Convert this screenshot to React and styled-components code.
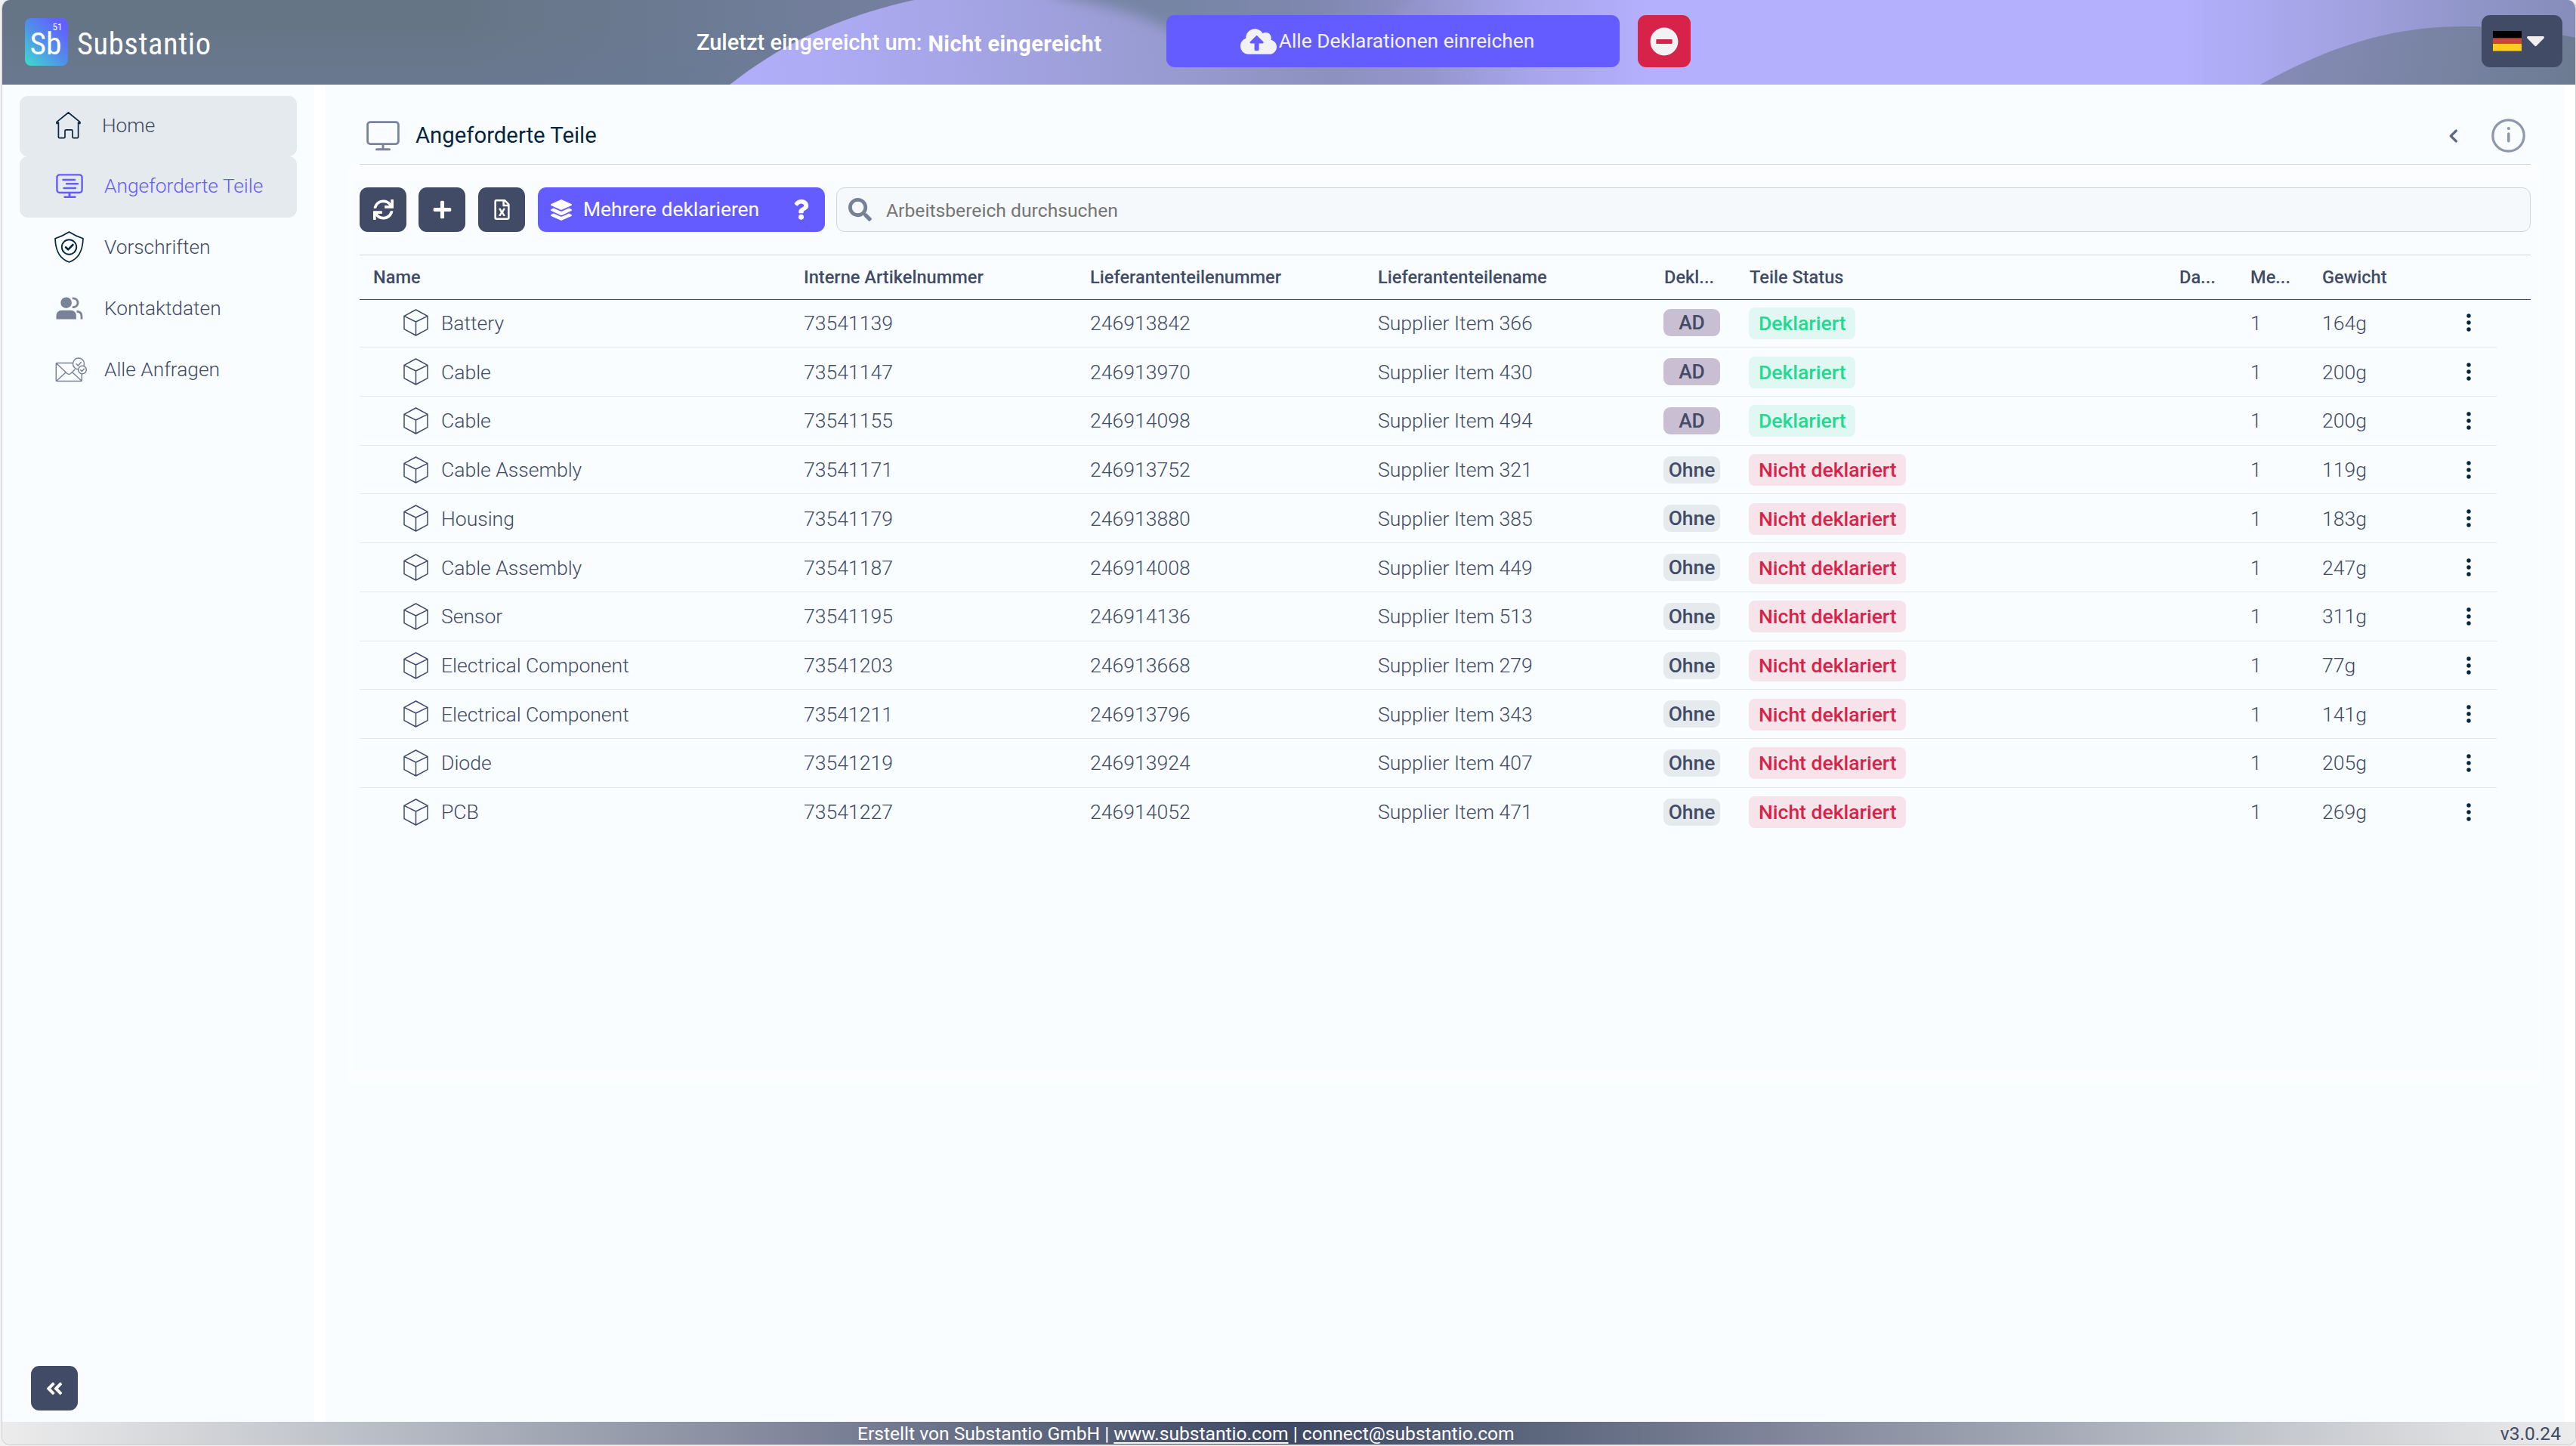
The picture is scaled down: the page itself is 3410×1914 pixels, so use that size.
import React from 'react';
import styled, { createGlobalStyle } from 'styled-components';
import {
  FaAngleDoubleLeft,
  FaCloudUploadAlt,
  FaLayerGroup,
  FaMinusCircle,
  FaPlus,
  FaQuestion,
  FaRegFileExcel,
  FaSearch,
  FaSync,
} from 'react-icons/fa';

const colors = {
  navy: '#414b66',
  ink: '#08253f',
  purple: '#645cff',
  red: '#d72349',
  muted: '#7a8298',
  surface: '#f9fdff',
  line: '#d1d6db',
  rowLine: '#e3e8ec',
};

const GlobalStyle = createGlobalStyle`
  * {
    box-sizing: border-box;
  }

  body {
    margin: 0;
    background: #f1f1f1;
    font-family: Roboto, sans-serif;
    color: ${colors.navy};
  }

  button {
    border: 0;
    padding: 0;
    font-family: inherit;
  }

  svg {
    display: block;
    flex: none;
  }
`;

const Page = styled.div`
  width: 3410px;
  height: 1914px;
  padding: 0 0 1px 2px;
`;

const Window = styled.div`
  display: flex;
  flex-direction: column;
  height: 100%;
  border: 1px solid #cdcfd1;
  border-top: 0;
  border-radius: 11px;
  overflow: hidden;
  background: #fff;
`;

/* Header */

const Header = styled.header`
  position: relative;
  display: flex;
  flex: none;
  height: 112px;
  color: #fff;
`;

const Backdrop = styled.svg`
  position: absolute;
  inset: 0;
  width: 100%;
  height: 100%;
`;

const Brand = styled.div`
  position: relative;
  display: flex;
  width: 919px;
  padding: 24px 0 0 30px;
`;

const Submitted = styled.div`
  position: relative;
  display: flex;
  width: 622px;
  font-size: 29px;
  line-height: 34px;
  font-weight: 500;
  white-space: nowrap;
  padding-top: 39px;
`;

const SubmittedValue = styled.b`
  font-weight: 700;
  letter-spacing: 0.4px;
  margin: 2px 0 0 8px;
`;

const HeaderButton = styled.button`
  position: relative;
  display: flex;
  align-items: center;
  justify-content: center;
  width: ${({ $width }) => $width}px;
  height: 69px;
  margin: 20px 24px 0 0;
  border-radius: 11px;
  background: ${({ $bg }) => $bg};
  color: #f2f2f5;
  font-size: 26.3px;
  gap: 3px;
  white-space: nowrap;
`;

const SubmitLabel = styled.span`
  padding-bottom: 1px;
  margin-right: 15px;
`;

const LanguageButton = styled(HeaderButton)`
  margin: 20px 17px 0 auto;
  gap: 7px;
  padding-right: 9px;
`;

/* Body */

const Body = styled.div`
  display: flex;
  flex: 1;
  min-height: 0;
`;

const Sidebar = styled.aside`
  display: flex;
  flex-direction: column;
  width: 413px;
  padding: 15px 23px;
  background: ${colors.surface};
`;

const NavItem = styled.a`
  display: flex;
  align-items: center;
  height: ${({ $height }) => $height || 81}px;
  border-radius: 11px;
  padding: 0 0 3px 48px;
  font-size: 26.3px;
  font-weight: 300;
  background: ${({ $filled }) => ($filled ? '#e5eaee' : 'transparent')};
  color: ${({ $active }) => ($active ? colors.purple : colors.navy)};
`;

const NavIcon = styled.span`
  width: ${({ $width }) => $width || 64}px;
  color: ${({ $color }) => $color};

  svg {
    margin-left: ${({ $nudge }) => $nudge || 0}px;
  }
`;

const CollapseButton = styled.button`
  display: flex;
  align-items: center;
  justify-content: center;
  width: 62px;
  height: 59px;
  margin: auto 0 0 15px;
  padding-right: 1px;
  border-radius: 11px;
  background: ${colors.navy};
  color: #fff;
`;

const Main = styled.main`
  width: 2964px;
  margin-left: 15px;
  padding: 0 30px;
  background: ${colors.surface};
`;

const TitleBar = styled.div`
  display: flex;
  align-items: center;
  height: 106px;
  margin: 0 15px;
  padding: 30px 7px 0 9px;
  border-bottom: 1px solid ${colors.line};
`;

const Title = styled.h1`
  flex: 1;
  margin: 0 0 2px 21px;
  font-size: 29.3px;
  font-weight: 400;
  color: ${colors.ink};
`;

const ChevronSlot = styled.span`
  margin-right: 44px;
`;

const Panel = styled.section`
  height: 1218px;
  border: solid #fcfdff;
  border-width: 20px 5px;
  border-radius: 6px;
  padding: 10px 10px 0;
`;

const Toolbar = styled.div`
  display: flex;
  height: 59px;
`;

const ToolButton = styled.button`
  display: flex;
  align-items: center;
  justify-content: center;
  width: 62px;
  margin-right: ${({ $gap }) => $gap || 16}px;
  border-radius: 11px;
  background: ${colors.navy};
  color: #fff;
`;

const DeclareGroup = styled.div`
  display: flex;
  align-items: center;
  width: 380px;
  margin-right: 15px;
  padding: 0 18px 0 17px;
  border-radius: 11px;
  background: ${colors.purple};
  color: #fff;
  font-size: 26.4px;
`;

const DeclareLabel = styled.span`
  flex: 1;
  margin: 0 0 1px 15px;
`;

const SearchBox = styled.div`
  display: flex;
  flex: 1;
  align-items: center;
  border: 1px solid ${colors.line};
  border-radius: 11px;
  padding: 0 15px;
  background: #f6f9fc;
  color: #757575;
  font-size: 24.7px;

  svg {
    color: #768097;
  }
`;

const Placeholder = styled.span`
  margin: 2px 0 0 19px;
`;

/* Table */

const columns = '379px 381px 379px 113px 569px 94px 95px 190px 1fr';

const HeadRow = styled.div`
  display: grid;
  grid-template-columns: 570px ${columns};
  align-items: center;
  height: 60px;
  margin-top: 30px;
  padding-left: 18px;
  border-top: 1px solid ${colors.line};
  border-bottom: 1px solid ${colors.navy};
  font-size: 23.6px;
  font-weight: 500;
`;

const TableBody = styled.div`
  margin-top: -1.5px;
`;

const Row = styled.div`
  display: grid;
  grid-template-columns: 570px ${columns};
  align-items: center;
  width: 2829px;
  height: 64.74px;
  padding-left: 18px;
  border-bottom: 1px solid ${colors.rowLine};
  font-size: 26.6px;
  font-weight: 300;
  white-space: nowrap;

  &:last-of-type {
    border-bottom-color: transparent;
  }
`;

const NameCell = styled.div`
  display: flex;
  align-items: center;
  gap: 17px;
  padding-left: 40px;
  letter-spacing: -0.04px;
`;

const Badge = styled.span`
  display: flex;
  align-items: center;
  justify-content: center;
  width: 75px;
  height: 36px;
  margin-left: -1px;
  border-radius: 9px;
  font-size: 26.4px;
  font-weight: 500;
  background: ${({ $filled }) => ($filled ? '#c9bfd2' : '#e5eaef')};
`;

const Status = styled.span`
  justify-self: start;
  height: 42px;
  margin: 1px 0 0 -1px;
  line-height: 42px;
  padding: 0 12px 0 13px;
  border-radius: 8px;
  font-size: 26.5px;
  font-weight: 500;
  background: ${({ $done }) => ($done ? '#e1f8f2' : '#f7e4ea')};
  color: ${({ $done }) => ($done ? '#23d893' : colors.red)};
`;

/* Footer */

const Footer = styled.footer`
  display: flex;
  flex: none;
  align-items: center;
  height: 30px;
  padding: 1px 19px 0 1132px;
  font-size: 24.6px;
  line-height: 30px;
  background: linear-gradient(
    90deg,
    #ececec 0,
    #c6c9cf 11%,
    #b0b5bf 17%,
    #80859a 31%,
    #5d677e 40%,
    #3f4964 50%,
    #5d677e 60%,
    #80859a 69%,
    #b0b5bf 83%,
    #c6c9cf 89%,
    #ececec 100%
  );
`;

const Credits = styled.span`
  flex: 1;
  color: #fff;

  a {
    text-decoration: underline;
    text-decoration-thickness: 2px;
    text-underline-offset: 3px;
  }
`;

const HeaderArt = () => (
  <Backdrop viewBox="3 0 3406 112" preserveAspectRatio="none" aria-hidden="true">
    <defs>
      <linearGradient id="base" gradientUnits="userSpaceOnUse" x1="0" y1="0" x2="3410" y2="0">
        <stop offset="0" stopColor="#667585" />
        <stop offset="0.18" stopColor="#667586" />
        <stop offset="0.27" stopColor="#6c7b93" />
        <stop offset="0.35" stopColor="#757fa0" />
        <stop offset="0.46" stopColor="#7785a5" />
        <stop offset="0.51" stopColor="#7f88af" />
        <stop offset="0.56" stopColor="#9191c8" />
        <stop offset="0.6" stopColor="#a8a5ec" />
        <stop offset="0.64" stopColor="#b4b0fe" />
        <stop offset="0.845" stopColor="#b4b0fe" />
        <stop offset="0.91" stopColor="#a2a2e1" />
        <stop offset="0.96" stopColor="#9095c8" />
        <stop offset="1" stopColor="#868dba" />
      </linearGradient>
      <linearGradient id="leftTint" x1="0" y1="0" x2="0" y2="1">
        <stop offset="0.3" stopColor="#6b7a96" stopOpacity="0" />
        <stop offset="1" stopColor="#6b7a96" stopOpacity="0.6" />
      </linearGradient>
      <linearGradient id="wave" gradientUnits="userSpaceOnUse" x1="1000" y1="112" x2="2080" y2="20">
        <stop offset="0" stopColor="#b1aef9" />
        <stop offset="0.2" stopColor="#a8a7eb" />
        <stop offset="0.5" stopColor="#989bd1" />
        <stop offset="0.7" stopColor="#8c91bf" />
        <stop offset="0.82" stopColor="#9595cd" />
        <stop offset="0.92" stopColor="#a5a3e8" stopOpacity="0.8" />
        <stop offset="1" stopColor="#b4b0fe" stopOpacity="0" />
      </linearGradient>
      <linearGradient id="hill" gradientUnits="userSpaceOnUse" x1="3030" y1="60" x2="3400" y2="130">
        <stop offset="0" stopColor="#858bb5" />
        <stop offset="0.5" stopColor="#7984a4" />
        <stop offset="1" stopColor="#6c7b92" />
      </linearGradient>
      <filter id="soft" x="-20%" y="-100%" width="140%" height="300%">
        <feGaussianBlur stdDeviation="9" />
      </filter>
    </defs>
    <rect width="3410" height="112" fill="url(#base)" />
    <rect width="1100" height="112" fill="url(#leftTint)" />
    <path d="M966 112C1030 62 1100 25 1210 0H2080V112Z" fill="url(#wave)" />
    <path
      d="M1340 -40L1405 -5C1470 8 1520 22 1560 46C1640 70 1750 70 1830 40L1900 -40Z"
      fill="url(#base)"
      filter="url(#soft)"
    />
    <path d="M2992 112C3090 58 3170 35 3262 35C3320 35 3370 42 3410 50V112Z" fill="url(#hill)" />
  </Backdrop>
);

const Logo = () => (
  <svg width="260" height="64" viewBox="33 24 260 64" fontFamily="Roboto Condensed, Roboto, sans-serif">
    <defs>
      <linearGradient id="tile" x1="0" y1="1" x2="0.9" y2="0">
        <stop offset="0" stopColor="#3ddccd" />
        <stop offset="0.5" stopColor="#518fe9" />
        <stop offset="0.9" stopColor="#6260ff" />
      </linearGradient>
    </defs>
    <rect x="33" y="24" width="57" height="63" rx="8" fill="url(#tile)" />
    <text x="39.5" y="72" fontSize="41" fill="#fff" textLength="42" lengthAdjust="spacingAndGlyphs">Sb</text>
    <text x="69.5" y="40" fontSize="13" fill="#fff">51</text>
    <text x="102" y="72" fontSize="40.5" fill="#fff" textLength="177">Substantio</text>
  </svg>
);

const Flag = () => (
  <svg width="38" height="27" viewBox="0 0 38 27">
    <path fill="#000" d="M0 0h38v9.5H0z" />
    <path fill="#c9463c" d="M0 9.5h38v8H0z" />
    <path fill="#fbcd20" d="M0 17h38v10H0z" />
    <path fill="#a88f2c" d="M0 26h38v1H0z" />
  </svg>
);

const Caret = () => (
  <svg width="23" height="14" viewBox="0 0 23 14">
    <path fill="#efefef" d="M1.8 0h19.4c1.6 0 2.3 1.6 1.2 2.8L12.8 12.6c-.8.8-1.9.8-2.6 0L.6 2.8C-.5 1.6.2 0 1.8 0z" />
  </svg>
);

const HomeIcon = () => (
  <svg width="33" height="36" viewBox="0 0 33 36" fill="none" stroke={colors.ink} strokeWidth="1.7" strokeLinejoin="round" strokeLinecap="round">
    <path d="M3.4 14.2L1.2 15.6.9 13.6 16.5 1 32 13.6 31.8 15.6 29.6 14.2V33.2Q29.6 34.6 28.2 34.6H23.4Q22 34.6 22 33.2V25.2Q22 23.8 20.6 23.8H13.4Q12 23.8 12 25.2V33.2Q12 34.6 10.6 34.6H4.8Q3.4 34.6 3.4 33.2Z" />
  </svg>
);

const MonitorListIcon = () => (
  <svg width="36" height="33" viewBox="0 0 36 33" fill="none" stroke="currentColor" strokeLinecap="round">
    <rect x="1.4" y="1.4" width="33.2" height="23.6" rx="3.5" strokeWidth="2.4" />
    <path strokeWidth="2.4" d="M9.5 8H25M14 13.2h15M10.5 19H26M11.5 30.8h14" />
    <path strokeWidth="3" strokeLinecap="butt" d="M18 25v5" />
  </svg>
);

const ShieldIcon = () => (
  <svg width="39" height="42" viewBox="0 0 39 42" fill="none" stroke={colors.ink} strokeLinejoin="round" strokeLinecap="round">
    <path strokeWidth="1.7" d="M19.5 1C14 4.5 8 7.5 1 9.8 1.5 25 6 36.5 19.5 41 33 36.5 37.5 25 38 9.8 31 7.5 25 4.5 19.5 1z" />
    <circle cx="19.5" cy="21" r="9.7" strokeWidth="1.9" />
    <path strokeWidth="2.6" d="M15 21.3l3.2 3 6.3-6.3" />
  </svg>
);

const UsersIcon = () => (
  <svg width="36" height="30" viewBox="0 0 36 30" fill="currentColor">
    <circle cx="13.6" cy="7.7" r="7.3" />
    <path d="M.5 29.5V25c0-4.4 3-7.3 7.2-7.3h12c4.2 0 7.2 2.9 7.2 7.3v4.5z" />
    <path fill="none" stroke="currentColor" strokeWidth="2.8" d="M21.8 1.9c9.6-.6 9.6 12.3 0 11.7M27.5 19.2c4.2.3 6.5 2.6 6.5 6.3v4" />
  </svg>
);

const MailIcon = () => (
  <svg width="42" height="33" viewBox="0 0 42 33" fill="none" stroke="currentColor" strokeWidth="1.5" strokeLinejoin="round" strokeLinecap="round">
    <path d="M23 7.5H2.3Q1.3 7.5 1.3 8.5V30.5Q1.3 31.5 2.3 31.5H34.3Q35.3 31.5 35.3 30.5V22M2 8.2L16 21.5Q18.2 23.4 20.4 21.5L26 16.2M2 31L14 20M34.8 31L23 20" />
    <circle cx="31" cy="8.5" r="7.5" />
    <circle cx="36" cy="16.5" r="5.3" fill={colors.surface} />
    <path d="M28 8.8l2.3 2.2 4-4.4M33.7 16.8l1.7 1.6 3-3.2" />
  </svg>
);

const MonitorIcon = () => (
  <svg width="44" height="40" viewBox="0 0 44 40" fill="none" stroke="#7b839a" strokeLinecap="round">
    <rect x="1.6" y="1.6" width="40.8" height="29" rx="3.5" strokeWidth="2.8" />
    <path strokeWidth="3" d="M22 31v6M13.5 37.7h17" />
  </svg>
);

const ChevronIcon = () => (
  <svg width="12" height="18" viewBox="0 0 12 18" fill="none" stroke="#5f6984" strokeWidth="3.2" strokeLinecap="round" strokeLinejoin="round">
    <path d="M9.4 2L2.3 9l7.1 7" />
  </svg>
);

const InfoIcon = () => (
  <svg width="45" height="45" viewBox="0 0 45 45" fill="none" stroke="#8f98ab">
    <circle cx="22.5" cy="22.5" r="20.7" strokeWidth="3.2" />
    <circle cx="22.8" cy="13" r="2.1" fill="#8f98ab" stroke="none" />
    <path strokeWidth="3.6" strokeLinecap="round" d="M22.8 20v9.7" />
  </svg>
);

const CubeIcon = () => (
  <svg width="33" height="36" viewBox="0 0 33 36" fill="none" stroke={colors.navy} strokeWidth="1.5" strokeLinejoin="round">
    <path d="M16.5 1L32 9.4V26.6L16.5 35 1 26.6V9.4zM1 9.4l15.5 7.6L32 9.4M16.5 17v18" />
  </svg>
);

const DotsIcon = () => (
  <svg width="8" height="24" viewBox="0 0 8 24" fill={colors.ink}>
    <circle cx="4" cy="3" r="2.7" />
    <circle cx="4" cy="12" r="2.7" />
    <circle cx="4" cy="21" r="2.7" />
  </svg>
);

const navItems = [
  { label: 'Home', icon: HomeIcon, color: colors.ink, filled: true, height: 80, width: 61 },
  { label: 'Angeforderte Teile', icon: MonitorListIcon, color: colors.purple, filled: true, active: true },
  { label: 'Vorschriften', icon: ShieldIcon, color: colors.ink, nudge: -2 },
  { label: 'Kontaktdaten', icon: UsersIcon, color: colors.muted },
  { label: 'Alle Anfragen', icon: MailIcon, color: colors.muted, nudge: -1 },
];

const headings = [
  'Name',
  'Interne Artikelnummer',
  'Lieferantenteilenummer',
  'Lieferantenteilename',
  'Dekl...',
  'Teile Status',
  'Da...',
  'Me...',
  'Gewicht',
];

const parts = [
  ['Battery', '73541139', '246913842', 366, true, '164g'],
  ['Cable', '73541147', '246913970', 430, true, '200g'],
  ['Cable', '73541155', '246914098', 494, true, '200g'],
  ['Cable Assembly', '73541171', '246913752', 321, false, '119g'],
  ['Housing', '73541179', '246913880', 385, false, '183g'],
  ['Cable Assembly', '73541187', '246914008', 449, false, '247g'],
  ['Sensor', '73541195', '246914136', 513, false, '311g'],
  ['Electrical Component', '73541203', '246913668', 279, false, '77g'],
  ['Electrical Component', '73541211', '246913796', 343, false, '141g'],
  ['Diode', '73541219', '246913924', 407, false, '205g'],
  ['PCB', '73541227', '246914052', 471, false, '269g'],
];

const PartRow = ({ part: [name, article, supplierNo, item, declared, weight] }) => (
  <Row>
    <NameCell>
      <CubeIcon />
      {name}
    </NameCell>
    <span>{article}</span>
    <span>{supplierNo}</span>
    <span>Supplier Item {item}</span>
    <Badge $filled={declared}>{declared ? 'AD' : 'Ohne'}</Badge>
    <Status $done={declared}>{declared ? 'Deklariert' : 'Nicht deklariert'}</Status>
    <span />
    <span>1</span>
    <span>{weight}</span>
    <DotsIcon />
  </Row>
);

const App = () => (
  <Page>
    <GlobalStyle />
    <Window>
      <Header>
        <HeaderArt />
        <Brand>
          <Logo />
        </Brand>
        <Submitted>
          Zuletzt eingereicht um:
          <SubmittedValue>Nicht eingereicht</SubmittedValue>
        </Submitted>
        <HeaderButton $width={600} $bg={colors.purple}>
          <FaCloudUploadAlt size={48} />
          <SubmitLabel>Alle Deklarationen einreichen</SubmitLabel>
        </HeaderButton>
        <HeaderButton $width={70} $bg={colors.red}>
          <FaMinusCircle size={38} />
        </HeaderButton>
        <LanguageButton $width={107} $bg={colors.navy}>
          <Flag />
          <Caret />
        </LanguageButton>
      </Header>
      <Body>
        <Sidebar>
          {navItems.map(({ label, icon: Icon, color, filled, active, height, width, nudge }) => (
            <NavItem key={label} $filled={filled} $active={active} $height={height}>
              <NavIcon $color={color} $width={width} $nudge={nudge}>
                <Icon />
              </NavIcon>
              {label}
            </NavItem>
          ))}
          <CollapseButton>
            <FaAngleDoubleLeft size={26} />
          </CollapseButton>
        </Sidebar>
        <Main>
          <TitleBar>
            <MonitorIcon />
            <Title>Angeforderte Teile</Title>
            <ChevronSlot>
              <ChevronIcon />
            </ChevronSlot>
            <InfoIcon />
          </TitleBar>
          <Panel>
            <Toolbar>
              <ToolButton>
                <FaSync size={27} />
              </ToolButton>
              <ToolButton $gap={17}>
                <FaPlus size={27} />
              </ToolButton>
              <ToolButton $gap={17}>
                <FaRegFileExcel size={27} />
              </ToolButton>
              <DeclareGroup>
                <FaLayerGroup size={28} />
                <DeclareLabel>Mehrere deklarieren</DeclareLabel>
                <FaQuestion size={27} />
              </DeclareGroup>
              <SearchBox>
                <FaSearch size={31} />
                <Placeholder>Arbeitsbereich durchsuchen</Placeholder>
              </SearchBox>
            </Toolbar>
            <HeadRow>
              {headings.map((heading) => (
                <span key={heading}>{heading}</span>
              ))}
            </HeadRow>
            <TableBody>
              {parts.map((part) => (
                <PartRow key={part[1]} part={part} />
              ))}
            </TableBody>
          </Panel>
        </Main>
      </Body>
      <Footer>
        <Credits>
          Erstellt von Substantio GmbH | <a>www.substantio.com</a> | connect@substantio.com
        </Credits>
        v3.0.24
      </Footer>
    </Window>
  </Page>
);

export default App;
